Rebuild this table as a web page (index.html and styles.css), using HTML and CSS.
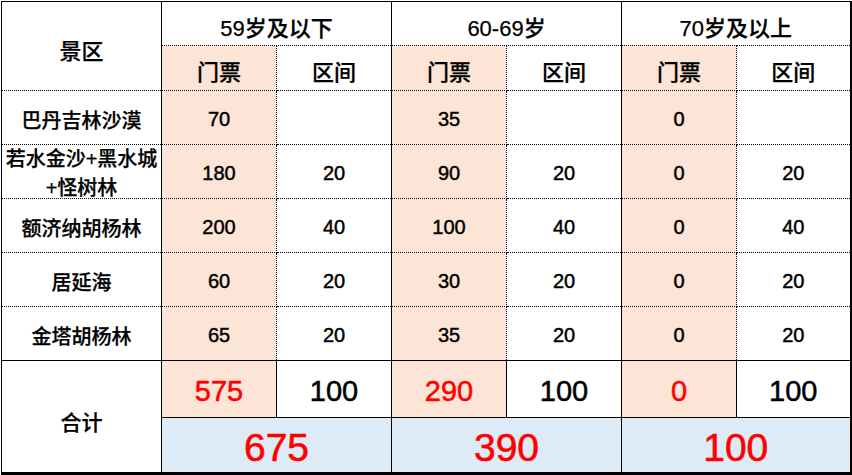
FILE: index.html
```html
<!DOCTYPE html>
<html lang="zh-CN">
<head>
<meta charset="utf-8">
<title>门票价格表</title>
<link rel="stylesheet" href="styles.css">
</head>
<body>
<table class="price">
  <colgroup>
    <col class="c-name">
    <col class="c-sub"><col class="c-sub">
    <col class="c-sub"><col class="c-sub">
    <col class="c-sub"><col class="c-sub-last">
  </colgroup>
  <thead>
    <tr class="r-group">
      <th rowspan="2" class="name head"><span class="shift-head">景区</span></th>
      <th colspan="2" class="group">59岁及以下</th>
      <th colspan="2" class="group">60-69岁</th>
      <th colspan="2" class="group">70岁及以上</th>
    </tr>
    <tr class="r-sub">
      <th class="ticket sub">门票</th><th class="route sub">区间</th>
      <th class="ticket sub">门票</th><th class="route sub">区间</th>
      <th class="ticket sub">门票</th><th class="route sub">区间</th>
    </tr>
  </thead>
  <tbody>
    <tr class="r-data">
      <td class="name">巴丹吉林沙漠</td>
      <td class="ticket">70</td><td class="route"></td>
      <td class="ticket">35</td><td class="route"></td>
      <td class="ticket">0</td><td class="route"></td>
    </tr>
    <tr class="r-data">
      <td class="name wrap"><div class="two-line"><span>若水金沙+黑水城</span><span>+怪树林</span></div></td>
      <td class="ticket">180</td><td class="route">20</td>
      <td class="ticket">90</td><td class="route">20</td>
      <td class="ticket">0</td><td class="route">20</td>
    </tr>
    <tr class="r-data">
      <td class="name">额济纳胡杨林</td>
      <td class="ticket">200</td><td class="route">40</td>
      <td class="ticket">100</td><td class="route">40</td>
      <td class="ticket">0</td><td class="route">40</td>
    </tr>
    <tr class="r-data">
      <td class="name">居延海</td>
      <td class="ticket">60</td><td class="route">20</td>
      <td class="ticket">30</td><td class="route">20</td>
      <td class="ticket">0</td><td class="route">20</td>
    </tr>
    <tr class="r-data">
      <td class="name">金塔胡杨林</td>
      <td class="ticket">65</td><td class="route">20</td>
      <td class="ticket">35</td><td class="route">20</td>
      <td class="ticket">0</td><td class="route">20</td>
    </tr>
    <tr class="r-sum">
      <td rowspan="2" class="name total-label"><span class="shift-total">合计</span></td>
      <td class="ticket sum red">575</td><td class="route sum">100</td>
      <td class="ticket sum red">290</td><td class="route sum">100</td>
      <td class="ticket sum red">0</td><td class="route sum">100</td>
    </tr>
    <tr class="r-grand">
      <td colspan="2" class="grand">675</td>
      <td colspan="2" class="grand">390</td>
      <td colspan="2" class="grand">100</td>
    </tr>
  </tbody>
</table>
</body>
</html>
```

FILE: styles.css
```css
html, body {
  margin: 0;
  padding: 0;
  background: #ffffff;
}

body {
  padding: 1px 0 0 1px;
}

.price {
  border-collapse: collapse;
  table-layout: fixed;
  width: 850px;
  font-family: "Liberation Sans", "Noto Sans CJK SC", sans-serif;
  font-weight: 500;
  color: #000;
  -webkit-text-stroke: 0.25px #000;
  border-top: 1px solid #000;
  border-left: 1px solid #000;
  border-right: 2px solid #000;
  border-bottom: 3px solid #000;
}

.c-name { width: 160px; }
.c-sub { width: 115px; }
.c-sub-last { width: 114px; }

.price th,
.price td {
  padding: 3px 0 0 0;
  text-align: center;
  vertical-align: middle;
  font-weight: 500;
  border: 1px dotted #000;
  overflow: hidden;
  white-space: nowrap;
}

.r-group { height: 44px; }
.r-sub { height: 45px; }
.r-data { height: 54px; }
.r-sum { height: 57px; }
.r-grand { height: 56px; }

.price .group,
.price .sub {
  font-size: 22px;
}

.price .group { border-left: 1px solid #000; border-right: 1px solid #000; padding-top: 4px; }
.price .name { border-right: 1px solid #000; font-size: 20px; }
.price .head { font-size: 22px; padding: 0; }
.shift-head { display: inline-block; margin-top: 5px; }

.price td.ticket,
.price td.route { font-size: 20px; -webkit-text-stroke: 0.45px #000; }

.price .ticket { background: #fce4d6; }
.price tr > .route:not(:last-child) { border-right: 1px solid #000; }

.price td.wrap { padding: 0; overflow: visible; }
.two-line {
  box-sizing: border-box;
  height: 53px;
  padding-top: 5px;
  display: flex;
  flex-direction: column;
  justify-content: center;
  align-items: center;
  line-height: 29px;
}

.price .r-sum td { border: 1px solid #000; }
.price .r-grand td { border: 1px solid #000; }

.price td.sum { font-size: 29px; padding-top: 5px; -webkit-text-stroke: 0.5px #000; }
.price td.red { color: #ff0000; -webkit-text-stroke-color: #ff0000; }

.price td.grand {
  background: #ddebf7;
  color: #ff0000;
  -webkit-text-stroke: 0.6px #ff0000;
  font-size: 39px;
  padding-top: 6px;
}

.price td.total-label { font-size: 21px; padding: 0; }
.shift-total { display: inline-block; margin-top: 9px; }
```
